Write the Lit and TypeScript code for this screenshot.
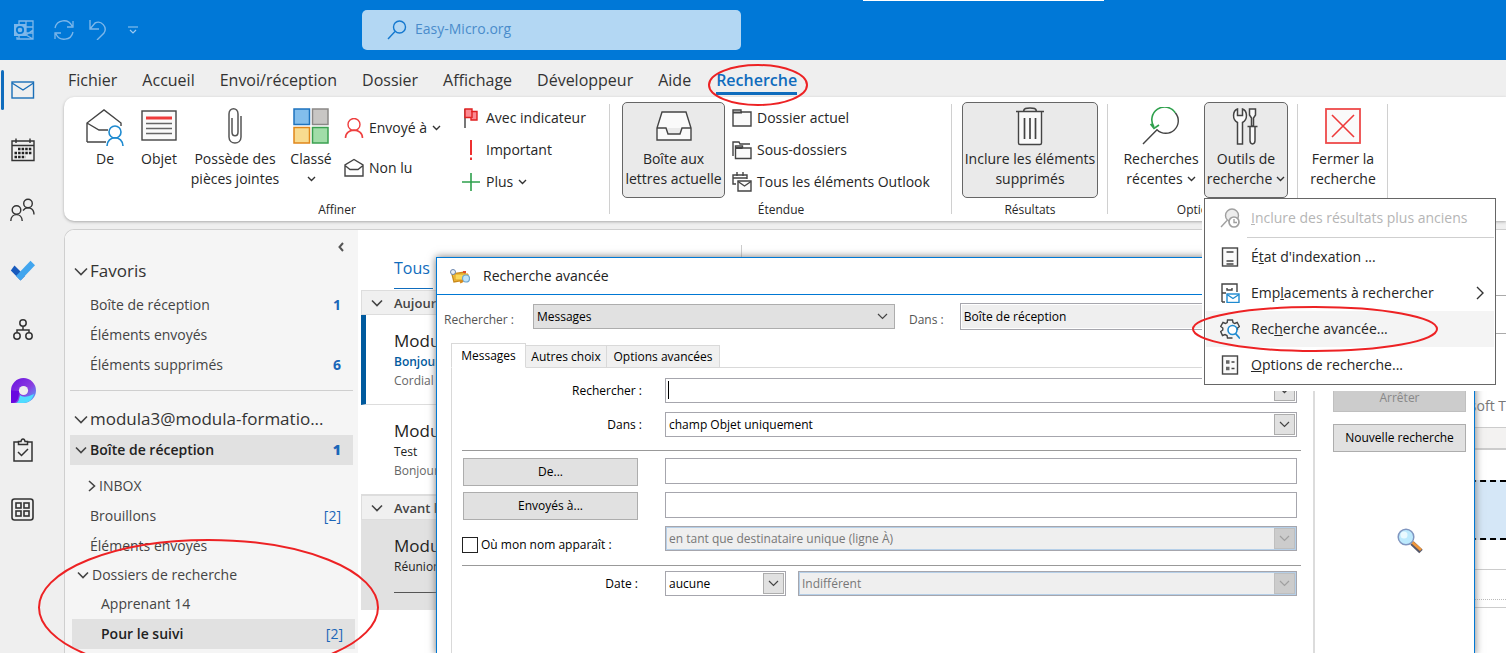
import { LitElement, html, css, svg, nothing } from "lit";
import { customElement } from "lit/decorators.js";
import { classMap } from "lit/directives/class-map.js";

const icon = (w: number, h: number, body: unknown, cls = "") =>
  html`<svg class="ico ${cls}" width=${w} height=${h} viewBox="0 0 ${w} ${h}" fill="none" stroke="#444" stroke-width="1.4" aria-hidden="true">${body}</svg>`;

const chevron = (color = "#333") =>
  icon(9, 6, svg`<path d="M1 1l3.500 3.500L8 1" stroke=${color} stroke-width="1.4"/>`, "chev");

const treeOpen = icon(14, 9, svg`<path d="M1 1.500l6 6 6-6" stroke="#444" stroke-width="1.6"/>`);
const treeSmall = icon(12, 8, svg`<path d="M1 1.500l5 5 5-5" stroke="#444" stroke-width="1.6"/>`);
const treeClosed = icon(8, 12, svg`<path d="M1 1l5.500 5L1 11" stroke="#444" stroke-width="1.6"/>`);

const icons = {
  outlook: icon(20, 20, svg`<g stroke="#7db7ea" stroke-width="1.3"><path d="M5 5V1h14v18H3v-2M12 1v6h7M12 7v6M5 1v4M12 13h7M19 10l-7 5 7 4M5 13v6"/></g><rect x="0" y="4" width="12" height="12" fill="#7db7ea" stroke="none"/><circle cx="6" cy="10" r="3.2" stroke="#0078d7" stroke-width="1.8"/>`),
  sync: icon(20, 20, svg`<g stroke="#7db7ea" stroke-width="1.3"><path d="M1 8a9 9 0 0 1 17-2M19 1v6h-6M19 12a9 9 0 0 1-17 2M1 19v-6h6"/></g>`),
  undo: icon(20, 20, svg`<path d="M2 0v9h9M2 9l5-6a7 7 0 0 1 9 10l-7 7" stroke="#7db7ea" stroke-width="1.4"/>`),
  custom: icon(10, 8, svg`<path d="M0 1h10M2 4l3 3 3-3" stroke="#9cc9f0" stroke-width="1.2"/>`),
  loupe: icon(20, 20, svg`<circle cx="12.500" cy="7" r="6" stroke="#1478cf"/><path d="M8 11.500L1 19" stroke="#1478cf"/>`),
  mail: icon(24, 18, svg`<rect x="1" y="1" width="21.500" height="16" stroke="#1b6fb8"/><path d="M1 2l11 7L22.500 2" stroke="#1b6fb8"/>`),
  calendar: icon(24, 24, svg`<path d="M1 3h22v19.500H1zM1 7.500h22M5 .5V5M19 .5V5" stroke="#333"/><path d="M7 11h14M3.500 15h17.500M3.500 19h11" stroke="#222" stroke-width="2.400" stroke-dasharray="2.500 1.100"/>`),
  people: icon(26, 24, svg`<g stroke="#333"><circle cx="6.500" cy="12" r="4.300"/><path d="M.8 23c0-8.500 11.400-8.500 11.400 0"/><circle cx="18" cy="5.500" r="4.300"/><path d="M13 12.500c4-5 11-2.500 11 4"/></g>`),
  todo: icon(26, 21, svg`<path d="M4.500 5.500L15 16l-4.500 4.500L.8 10.500z" fill="#185abd" stroke="none"/><path d="M20.500.8L25 5.200 10.500 20.500 6 16z" fill="#41a5ee" stroke="none"/>`),
  org: icon(20, 22, svg`<g stroke="#333" stroke-width="1.500"><circle cx="10" cy="4" r="3.200"/><circle cx="4" cy="17" r="3.200"/><circle cx="16" cy="17" r="3.200"/><path d="M10 7.500V11M4 13.500V11h12v2.500"/></g>`),
  loop: html`<svg class="ico" width="25" height="25" viewBox="0 0 25 25" aria-hidden="true"><defs><linearGradient id="lg" x1="0" y1="0" x2="1" y2="1"><stop offset="0" stop-color="#6a11e0"/><stop offset=".55" stop-color="#8a3ce0"/><stop offset="1" stop-color="#4ab8ff"/></linearGradient></defs><path d="M12.500 0a12.300 12.300 0 0 1 0 25H0V12.500A12.500 12.500 0 0 1 12.500 0z" fill="url(#lg)"/><path d="M5 25c3-1 3-4 4-8 3 3 9 1.500 14-1-1.500 5-5 9-10.500 9z" fill="#4fdcff"/><path d="M0 12.500V25h1c5 0 7-4 7-12z" fill="#6806e0"/><circle cx="12.500" cy="12.500" r="4.600" fill="#efefef"/></svg>`,
  tasks: icon(20, 24, svg`<g stroke="#333" stroke-width="1.500"><path d="M6 4H1v19h18V4h-5M5.500 6.500v-3H8c.5-3.500 3.500-3.500 4 0h2.500v3z"/><path d="M5 14l3.500 3.500L15 11"/></g>`),
  apps: icon(24, 24, svg`<g stroke="#333" stroke-width="1.600"><rect x="1" y="1" width="21" height="21" rx="2.500"/><rect x="5" y="5" width="5" height="5"/><rect x="13" y="5" width="5" height="5"/><rect x="5" y="13" width="5" height="5"/><rect x="13" y="13" width="5" height="5"/></g>`),
  from: icon(40, 40, svg`<path d="M2 36V17L19 4l17 13v3M2 36h19M2 17l12 7h9" fill="none"/><circle cx="30" cy="26" r="6" fill="#fff" stroke="#1e8ad0" stroke-width="1.600"/><path d="M22 40c0-11 16-11 16 0" stroke="#1e8ad0" stroke-width="1.600"/>`),
  subject: icon(36, 32, svg`<rect x="1" y="1" width="34" height="29" fill="#fafafa"/><path d="M5 8h26" stroke="#ee3a3a" stroke-width="3"/><path d="M5 13.500h26M5 18.500h26M5 23.500h26" stroke="#666"/>`),
  clip: icon(16, 38, svg`<path d="M14 9v21c0 8-12 8-12 0V7c0-7 9-7 9 0v18c0 5-6 5-6 0V11" stroke="#555" stroke-width="1.500"/>`),
  categories: icon(36, 36, svg`<g stroke-width="1.500"><rect x="1" y="1" width="15.500" height="15.500" fill="#83beec" stroke="#1e73be"/><rect x="19.500" y="1" width="15.500" height="15.500" fill="#c8c6c4" stroke="#8a8886"/><rect x="1" y="19.500" width="15.500" height="15.500" fill="#f8db8f" stroke="#e0861a"/><rect x="19.500" y="19.500" width="15.500" height="15.500" fill="#a1dda8" stroke="#3ba050"/></g>`),
  sentTo: icon(20, 20, svg`<circle cx="10" cy="6.500" r="6" stroke="#ee3f3f"/><path d="M1.500 20c0-10.500 17-10.500 17 0" stroke="#ee3f3f" stroke-width="1.600"/>`),
  unread: icon(20, 20, svg`<path d="M1 18V7l9-5.500L19 7v11zM1 7.500l5 4h8l5-4"/>`),
  flag: icon(20, 20, svg`<path d="M4 1v19" stroke="#555" stroke-width="1.600"/><path d="M4 1h7v2.500h5V12h-6V9.500H4z" fill="#fb8a92" stroke="#e02020"/><path d="M11 3v7" stroke="#e02020"/>`),
  important: icon(20, 20, svg`<path d="M10 0v15M10 17.500V20" stroke="#ee3030" stroke-width="2"/>`),
  plus: icon(20, 20, svg`<path d="M10 1v18M1 10h18" stroke="#2ea04c" stroke-width="1.600"/>`),
  inbox: icon(36, 30, svg`<path d="M1 29V17L6 1h24l5 16v12zM1 17h9l2 6h12l2-6h9" fill="#fafafa"/>`),
  folder: icon(20, 20, svg`<path d="M1 2h8v2h10v14H1z" fill="#fafafa"/><path d="M1 4.500h9" stroke-width="2"/>`),
  subfolders: icon(20, 20, svg`<path d="M1 16V2h6l1 2h10" /><path d="M3.500 18.500V6h7v2H19v10.500z" fill="#fafafa"/><path d="M3.500 8h7" stroke-width="2"/>`),
  allItems: icon(20, 20, svg`<path d="M4 12H1V3h14v4M1 6h14M5 0v4M11 0v4"/><path d="M6 9h13v10H6z" fill="#fafafa"/><path d="M6 9.500l6.500 4.500L19 9.500"/>`),
  trash: icon(30, 40, svg`<path d="M3.500 6v31c0 1 .5 1.500 1.500 1.500h20c1 0 1.500-.5 1.500-1.500V6" fill="#fafafa"/><path d="M1 5.500h28M8.500 5.500C9 2 11 2 15 2s6 0 6.500 3.500M9.500 12v21M15 12v21M20.500 12v21" stroke-width="1.700"/>`),
  recent: icon(38, 38, svg`<path d="M33.300 5.700A12.500 12.500 0 0 1 15 22.700L1 37" stroke="#444"/><path d="M33.300 5.700A12.500 12.500 0 0 0 12 20M8.500 17l3.500 4.500 5-3.500" stroke="#2ea04c" stroke-width="1.600"/>`),
  tools: icon(28, 38, svg`<path d="M5.500 37V15.500C0 12.500.5 4 5.500 2v6.500h5V2c5 2 5.500 10.500 0 13.500V37z" fill="#fafafa" stroke-width="1.500"/><path d="M17.500 2h6v6l-2 3v8h-2v-8l-2-3zM15.500 19.500h10M18 19.500h5v14c0 4.500-5 4.500-5 0z" fill="#fafafa" stroke-width="1.500"/>`),
  close: icon(36, 36, svg`<rect x="1" y="1" width="34" height="34" fill="#fafafa" stroke="#ee4a4a" stroke-width="1.800"/><path d="M7 7l22 22M29 7L7 29" stroke="#ee3a3a" stroke-width="1.600"/>`),
  older: icon(20, 20, svg`<g stroke="#a0a0a0"><circle cx="12" cy="7.500" r="6.500" fill="#ededed"/><path d="M7 12.500L1 19"/><circle cx="14" cy="14" r="5" fill="#fff" stroke-width="1.700"/><path d="M14 11v3.500h3"/></g>`),
  indexing: icon(20, 20, svg`<rect x="2.500" y="1" width="15" height="18" fill="#fafafa"/><path d="M6.500 5h7M6.500 14h7M6.500 17h7"/>`),
  places: icon(20, 20, svg`<path d="M2 19V1h15v8M2 10h4M2 19h3" /><path d="M7 5v2h5V5"/><rect x="7" y="11" width="12" height="8.500" stroke="#1e8ad0" fill="#fff"/><path d="M7 11.500l6 4 6-4" stroke="#1e8ad0"/>`),
  advanced: icon(20, 20, svg`<path d="M12.500 19H7.500L7 16.500 5 15.500l-2.500 1L.7 12.500 2.800 11V9L.7 7.500 3 3.500l2.500 1L7.200 3.500 7.500 1h5l.5 2.500 1.700 1 2.500-1 2.200 4L17.500 9v2"/><circle cx="12.500" cy="11" r="4.500" stroke="#1e8ad0" fill="#fff" stroke-width="1.600"/><path d="M15.500 14.500l4.500 5" stroke="#1e8ad0" stroke-width="1.800"/>`),
  options: icon(20, 20, svg`<rect x="2.500" y="1" width="15" height="18" fill="#fafafa"/><path d="M6 7h3.500M6 13.500h3.500" stroke="#666" stroke-width="3.500"/><path d="M11.500 7h3M11.500 13.500h3"/>`),
  submenu: icon(8, 14, svg`<path d="M1 1l6 6-6 6" stroke="#333"/>`),
  searchFolder: icon(20, 16, svg`<path d="M2 6l13-2v8L4 14z" fill="#f7c948" stroke="#c98a1b"/><path d="M5 6h13v6H5z" fill="#fbd85a" stroke="#dd9c20" stroke-width="1"/><path d="M13 4h3" stroke="#e0502a" stroke-width="2"/><circle cx="3" cy="4" r="2.500" fill="#e7eef7" stroke="#6b86ad" stroke-width="1"/><circle cx="16" cy="10.500" r="3.500" fill="#bfe4fa" stroke="#6da6d0" stroke-width="1.200"/><path d="M10 14.500l3-1.500" stroke="#d98a1b" stroke-width="2"/>`),
  bigLoupe: icon(26, 26, svg`<path d="M15 15l9 8.500" stroke="#55586b" stroke-width="5"/><path d="M15 14l9 8" stroke="#f0963a" stroke-width="3"/><circle cx="9" cy="9" r="7.800" fill="#bdeafd" stroke="#8096c0" stroke-width="1.500"/><circle cx="7" cy="7" r="3.500" fill="#eafaff" stroke="none"/>`),
};

interface Folder { name: string; count?: string; kind?: string; tree?: unknown; cls?: string }
interface Mail { from: string; subject: string; preview?: string; cls?: string }

@customElement("app-root")
export class AppRoot extends LitElement {
  static styles = css`
    :host { display: flex; flex-direction: column; height: 100vh; overflow: hidden; position: relative;
      font: 14px/20px "Open Sans", "Noto Sans", sans-serif; color: #262626; background: #efefef; }
    * { box-sizing: border-box; }
    .ico { display: block; flex: none; }
    button, input, select { font: inherit; color: inherit; margin: 0; border-radius: 0; }
    button { border: 0; background: none; padding: 0; }

    .topbar { flex: none; height: 60px; background: #0078d7; display: flex; align-items: center; padding-left: 14px; position: relative; }
    .quick { display: flex; align-items: center; gap: 20px; flex: none; width: 348px; }
    .quick button:nth-child(2) { margin-right: -6px; }
    .search { flex: none; width: 379px; height: 40px; border-radius: 5px; background: #b3d7f3; display: flex; align-items: center; gap: 8px; padding-left: 25px; }
    .search input { border: 0; background: none; outline: 0; width: 240px; padding: 0 0 2px; }
    .search input::placeholder { color: #4a8ccb; opacity: 1; }
    .sliver { position: absolute; left: 863px; top: 0; width: 241px; height: 1px; background: #fff; }

    .shell { flex: 1; min-height: 0; display: grid; grid-template-columns: 64px minmax(0, 1fr); }
    .rail { display: flex; flex-direction: column; }
    .rail a { height: 60px; width: 46px; display: flex; align-items: center; justify-content: center; position: relative; }
    .rail a.on::before { content: ""; position: absolute; left: 1px; top: 10px; width: 3px; height: 40px; background: #0f6cbd; border-radius: 2px; }
    .main { display: flex; flex-direction: column; min-height: 0; }

    .tabs { flex: none; height: 37px; display: flex; gap: 25px; padding: 7px 0 0 4px; font-size: 16px; line-height: 26px; }
    .tabs a { color: #333; text-decoration: none; height: 28px; }
    .tabs a.on { color: #0f6cbd; font-weight: 600; border-bottom: 3px solid #0f6cbd; }

    .ribbon { flex: none; position: relative; z-index: 3; height: 124px; display: flex; background: #fff; border-radius: 10px 0 0 10px; box-shadow: 0 1px 3px #aaa; padding-top: 5px; }
    .group { display: flex; flex-direction: column; position: relative; }
    .group::after { content: ""; position: absolute; right: 0; top: 2px; height: 110px; width: 1px; background: #d0d0d0; }
    .row { display: flex; height: 96px; padding-left: 10px; }
    .glabel { font-size: 12px; line-height: 22px; padding-top: 1px; text-align: center; }
    .affiner { width: 546px; }
    .affiner .row { padding-left: 14px; }
    .etendue { width: 342px; }
    .etendue .row { padding-left: 12px; }
    .resultats { width: 156px; }
    .options { width: 190px; }
    .options .glabel { padding-right: 8px; }
    .fermer { width: 90px; }
    .fermer .row { padding-left: 3px; }
    .big { display: flex; flex-direction: column; align-items: center; white-space: nowrap; border: 1px solid transparent; border-radius: 5px; flex: none; }
    .big .pic { height: 46px; display: flex; align-items: center; justify-content: center; }
    .big .lines { display: flex; flex-direction: column; align-items: center; }
    .big .lines span { display: flex; align-items: center; justify-content: center; gap: 4px; height: 20px; }
    .big.on { background: #eaeaea; border-color: #666; }
    .w54 { width: 54px; } .w98 { width: 98px; } .w103 { width: 103px; } .w136 { width: 136px; }
    .w86 { width: 86px; } .w84 { width: 84px; }
    .col { display: flex; flex-direction: column; }
    .col.a { width: 117px; margin-left: 6px; padding-top: 6px; }
    .col.a .small { height: 40px; }
    .col.b .small { height: 32px; }
    .col.c { margin-left: 7px; }
    .col.c .small { height: 32px; }
    .small { display: flex; align-items: center; gap: 5px; white-space: nowrap; }
    .anchor { position: relative; display: flex; }

    .menu { position: absolute; left: 0; top: 96px; width: 292px; background: #fff; border: 1px solid #666; padding: 1px; box-shadow: 0 6px 0 #fff, -2px 0 0 #fff; z-index: 4; }
    .menu button { display: flex; align-items: center; width: 100%; height: 36px; padding: 0 10px 0 14px; gap: 11px; text-align: left; white-space: nowrap; }
    .menu button.on { background: #f4f4f4; }
    .menu button:disabled { color: #b5b5b5; }
    .menu span { flex: 1; }
    .menu hr { border: 0; border-top: 1px solid #cfcfcf; margin: 1px 0 1px 41px; }

    .workspace { flex: 1; min-height: 0; margin-top: 8px; display: flex; background: #fff; border-top: 1px solid #cfcfcf; border-left: 1px solid #cfcfcf; border-radius: 10px 0 0 0; }
    .folders { flex: none; width: 293px; background: #f5f5f5; border-radius: 9px 0 0 0; padding: 0 5px; overflow: hidden; display: flex; flex-direction: column; color: #444; }
    .collapse { flex: none; align-self: flex-end; height: 22px; padding: 11px 9px 0 0; }
    .folder { flex: none; display: flex; align-items: center; height: 30px; padding: 0 12px 0 20px; text-decoration: none; color: inherit; }
    .folder b, .folder i { margin-left: auto; font-style: normal; color: #1b66b8; }
    .folder .ico { margin-left: -16px; margin-right: 2px; }
    .folder.head { font-size: 17px; color: #333; height: 38px; }
    .folder.account { height: 32px; }
    .folder.inbox { background: #e1e1e1; font-weight: 600; color: #222; margin-bottom: 6px; }
    .folder.inbox .ico, .folder.node .ico { margin-left: -15px; margin-right: 3px; }
    .folder.sub .ico { margin-left: -2px; margin-right: 3px; }
    .folder.node { padding-left: 22px; height: 28px; }
    .folder.leaf { padding-left: 31px; }
    .folder.current { background: #e1e1e1; font-weight: 600; color: #222; margin: 0 -2px 0 2px; padding-left: 29px; }
    .folder.current i { font-weight: 400; }
    .folders hr { flex: none; width: 100%; border: 0; border-top: 1px solid #cfcfcf; margin: 10px 0 12px; }

    .messages { flex: none; width: 384px; padding-left: 3px; position: relative; }
    .messages::after { content: ""; position: absolute; right: 0; top: 15px; height: 120px; width: 1px; background: #ccc; }
    .filter { height: 60px; padding: 23px 0 0 33px; font-size: 16px; line-height: 30px; }
    .filter a { display: inline-block; height: 36px; padding-right: 3px; color: #0f6cbd; text-decoration: none; border-bottom: 1px solid #0f6cbd; }
    .day { height: 25px; background: #f0f0f0; border: 1px solid #ddd; display: flex; align-items: center; gap: 11px; padding-left: 9px; font-size: 13px; font-weight: 600; color: #444; white-space: nowrap; }
    .mail { height: 90px; padding: 14px 0 0 33px; border-bottom: 1px solid #ddd; font-size: 12px; }
    .mail strong { display: block; font-weight: 400; font-size: 17px; line-height: 24px; color: #222; }
    .mail em { display: block; font-style: normal; color: #222; line-height: 17px; }
    .mail small { display: block; font-size: 12px; line-height: 21px; color: #666; }
    .mail.unread { border-left: 5px solid #005a9e; padding-left: 28px; }
    .mail.unread em { color: #005a9e; font-weight: 600; }
    .mail.picked { background: #e1e1e1; border: 0; }
    .mail.picked hr { border: 0; border-top: 1px solid #555; margin: 17px 0 0; }

    .agenda { flex: 1; display: flex; flex-direction: column; align-items: stretch; }
    .agenda .box { margin: 65px 0 0; height: 39px; border: solid #aaa; border-width: 1px 0; flex: none; }
    .agenda .title { height: 93px; flex: none; text-align: right; white-space: nowrap; color: #777; font-size: 14px; line-height: 30px; padding-top: 57px; }
    .agenda .bar { height: 23px; flex: none; background: #f3f2f1; border: solid #ccc; border-width: 1px 0 2px; }
    .agenda .slot { height: 60px; flex: none; margin-top: 30px; background: #d5e7f7; border: dashed #000; border-width: 2px 0; }
    .agenda .l1 { height: 30px; flex: none; border-bottom: 1px solid #ccc; }
    .agenda .l2 { height: 30px; flex: none; border-bottom: 1px dotted #bbb; }
    .agenda .l3 { height: 8px; flex: none; border-bottom: 1px solid #ccc; }

    .dialog { position: absolute; z-index: 2; left: 436px; top: 257px; right: 31px; bottom: -2px; background: #fff; border: 1px solid #0078d4; box-shadow: 0 0 8px #777; font-size: 12px; color: #000; display: flex; flex-direction: column; }
    .dtitle { flex: none; height: 37px; display: flex; align-items: center; gap: 13px; padding-left: 13px; font-size: 14px; color: #222; border-bottom: 1px solid #0078d4; font-weight: 400; margin: 0; }
    .scope { flex: none; display: flex; align-items: center; height: 27px; margin: 8px 0 0 7px; color: #555; }
    .scope label { padding-top: 6px; }
    .scope .combo { width: 362px; margin: 0 14px 0 19px; }
    .scope .place { width: 350px; height: 27px; margin-left: 16px; padding: 0 3px; color: #000; background: #efefef; border: 1px solid #a6a6ad; outline: 1px solid #fff; outline-offset: -2px; }
    .dbody { flex: 1; display: flex; margin-top: 13px; padding-left: 14px; }
    .left { flex: 1; display: flex; flex-direction: column; }
    .dtabs { display: flex; align-items: flex-end; height: 25px; margin-bottom: -1px; position: relative; }
    .dtabs button { height: 23px; border: 1px solid #d9d9d9; border-left-width: 0; background: #f0f0f0; padding: 0 3px; width: 81px; white-space: nowrap; }
    .dtabs button:last-child { width: 113px; }
    .dtabs button.on { height: 25px; width: 75px; background: #fff; border-left-width: 1px; border-bottom-color: #fff; }
    .panel { flex: 1; border: 1px solid #d9d9d9; border-right: 2px solid #dcdcdc; padding: 10px 12px 0 10px; }
    .frow { display: grid; grid-template-columns: 180px minmax(0, 1fr); column-gap: 23px; align-items: center; padding-right: 4px; margin-bottom: 6px; }
    .frow.first { margin-bottom: 9px; }
    .frow > label { text-align: right; }
    .frow .push { width: 175px; height: 28px; margin-left: 1px; background: #e1e1e1; border: 1px solid #adadad; }
    .frow input[type="text"] { align-self: start; width: 100%; height: 26px; border: 1px solid #a6a6ad; background: #fff; padding: 0 3px; outline: 0; }
    .frow .check { display: flex; align-items: center; gap: 3px; text-align: left; height: 25px; padding-top: 13px; white-space: nowrap; }
    .check input { appearance: none; width: 16px; height: 16px; border: 1px solid #222; background: #fff; flex: none; }
    .panel hr { border: 0; border-top: 1px solid #999; margin: 13px 0 7px; }
    .panel hr.low { margin: 14px 0 5px; }
    .frow.date > label { padding-right: 4px; }
    .dates { display: grid; grid-template-columns: 121px minmax(0, 1fr); gap: 12px; }
    .combo { position: relative; display: block; height: 25px; }
    .combo select, .frow .combo input[type="text"] { appearance: none; display: block; width: 100%; height: 25px; padding: 0 3px; border: 1px solid #a6a6ad; background: #fff; outline: 0; opacity: 1; color: #000; }
    .combo .drop { position: absolute; right: 2px; top: 2px; width: 21px; height: 21px; background: #e1e1e1; border: 1px solid #adadad; display: flex; align-items: center; justify-content: center; pointer-events: none; }
    .combo.flat select { background: #e1e1e1; border-color: #adadad; }
    .combo.flat .drop { border: 0; background: none; }
    .combo.off select { background: #efefef; color: #777; box-shadow: inset 0 0 0 1px #b5cfe8; }
    .combo.off .drop { background: #ccc; border-color: #bfbfbf; }
    .caret { position: absolute; left: 3px; top: 3px; width: 1px; height: 18px; background: #000; }
    .side { flex: none; width: 159px; padding: 41px 8px 0 18px; display: flex; flex-direction: column; align-items: stretch; gap: 12px; }
    .side button { height: 28px; background: #e1e1e1; border: 1px solid #adadad; white-space: nowrap; }
    .side button:disabled { background: #ccc; border-color: #bfbfbf; color: #888; }
    .side .ico { align-self: center; margin: 64px 0 0 20px; }

    .mark { position: absolute; z-index: 9; pointer-events: none; overflow: visible; }
    .m1 { left: 708px; top: 64px; } .m2 { left: 1192px; top: 306px; } .m3 { left: 38px; top: 539px; }
  `;

  private folders: Folder[] = [
    { name: "Favoris", cls: "head", tree: treeOpen },
    { name: "Boîte de réception", count: "1", kind: "b" },
    { name: "Éléments envoyés" },
    { name: "Éléments supprimés", count: "6", kind: "b" },
    { name: "", kind: "hr" },
    { name: "modula3@modula-formatio...", cls: "head account", tree: treeOpen },
    { name: "Boîte de réception", count: "1", kind: "b", cls: "inbox", tree: treeSmall },
    { name: "INBOX", cls: "sub", tree: treeClosed },
    { name: "Brouillons", count: "[2]" },
    { name: "Éléments envoyés" },
    { name: "Dossiers de recherche", cls: "node", tree: treeSmall },
    { name: "Apprenant 14", cls: "leaf" },
    { name: "Pour le suivi", count: "[2]", cls: "current" },
  ];

  private folder(f: Folder) {
    if (f.kind === "hr") return html`<hr />`;
    return html`<a class="folder ${f.cls ?? ""}" href="#">${f.tree ?? nothing}<span>${f.name}</span>${
      f.count ? (f.kind === "b" ? html`<b>${f.count}</b>` : html`<i>${f.count}</i>`) : nothing}</a>`;
  }

  private big(pic: unknown, lines: unknown[], width: string, on = false) {
    return html`<button class=${classMap({ big: true, [width]: true, on })}><span class="pic">${pic}</span>
      <span class="lines">${lines.map((l) => html`<span>${l}</span>`)}</span></button>`;
  }

  private small(pic: unknown, text: string, drop = false) {
    return html`<button class="small">${pic}${text}${drop ? chevron() : nothing}</button>`;
  }

  private mail(m: Mail) {
    return html`<article class="mail ${m.cls ?? ""}"><strong>${m.from}</strong><em>${m.subject}</em>${
      m.preview ? html`<small>${m.preview}</small>` : html`<hr />`}</article>`;
  }

  private select(id: string, value: string, cls = "", label?: string) {
    const off = cls === "off";
    return html`<span class="combo ${cls}"><select id=${id} aria-label=${label ?? nothing} ?disabled=${off}><option>${value}</option></select>
      <span class="drop">${icon(11, 7, svg`<path d="M1 1l4.500 4.500L10 1" stroke=${off ? "#a0a0a0" : "#444"} stroke-width="1.200"/>`)}</span></span>`;
  }

  private ribbon() {
    return html`<section class="ribbon">
      <div class="group affiner"><div class="row">
        ${this.big(icons.from, ["De"], "w54")}
        ${this.big(icons.subject, ["Objet"], "w54")}
        ${this.big(icons.clip, ["Possède des", "pièces jointes"], "w98")}
        ${this.big(icons.categories, ["Classé", chevron()], "w54")}
        <div class="col a">${this.small(icons.sentTo, "Envoyé à", true)}${this.small(icons.unread, "Non lu")}</div>
        <div class="col b">${this.small(icons.flag, "Avec indicateur")}${this.small(icons.important, "Important")}${this.small(icons.plus, "Plus", true)}</div>
      </div><div class="glabel">Affiner</div></div>
      <div class="group etendue"><div class="row">
        ${this.big(icons.inbox, ["Boîte aux", "lettres actuelle"], "w103", true)}
        <div class="col c">${this.small(icons.folder, "Dossier actuel")}${this.small(icons.subfolders, "Sous-dossiers")}${this.small(icons.allItems, "Tous les éléments Outlook")}</div>
      </div><div class="glabel">Étendue</div></div>
      <div class="group resultats"><div class="row">
        ${this.big(icons.trash, ["Inclure les éléments", "supprimés"], "w136", true)}
      </div><div class="glabel">Résultats</div></div>
      <div class="group options"><div class="row">
        ${this.big(icons.recent, ["Recherches", html`récentes ${chevron()}`], "w86")}
        <div class="anchor">
          ${this.big(icons.tools, ["Outils de", html`recherche ${chevron()}`], "w84", true)}
          <div class="menu" role="menu">
            <button role="menuitem" disabled>${icons.older}<span><u>I</u>nclure des résultats plus anciens</span></button>
            <hr />
            <button role="menuitem">${icons.indexing}<span>É<u>t</u>at d'indexation ...</span></button>
            <button role="menuitem">${icons.places}<span>Emp<u>l</u>acements à rechercher</span>${icons.submenu}</button>
            <button role="menuitem" class="on">${icons.advanced}<span>Rec<u>h</u>erche avancée...</span></button>
            <button role="menuitem">${icons.options}<span><u>O</u>ptions de recherche...</span></button>
          </div>
        </div>
      </div><div class="glabel">Options</div></div>
      <div class="group fermer"><div class="row">
        ${this.big(icons.close, ["Fermer la", "recherche"], "w84")}
      </div></div>
    </section>`;
  }

  private dialog() {
    return html`<section class="dialog" role="dialog" aria-labelledby="dt">
      <h2 class="dtitle" id="dt">${icons.searchFolder}Recherche avancée</h2>
      <div class="scope">
        <label for="kind">Rechercher :</label>${this.select("kind", "Messages", "flat")}
        <label for="place">Dans :</label><input class="place" id="place" type="text" readonly .value=${"Boîte de réception"} />
      </div>
      <div class="dbody">
        <div class="left">
          <div class="dtabs" role="tablist"><button role="tab" class="on">Messages</button><button role="tab">Autres choix</button><button role="tab">Options avancées</button></div>
          <div class="panel">
            <div class="frow first"><label for="q">Rechercher :</label><span class="combo"><input id="q" type="text" /><span class="caret"></span><span class="drop">${chevron("#444")}</span></span></div>
            <div class="frow"><label for="f">Dans :</label>${this.select("f", "champ Objet uniquement")}</div>
            <hr />
            <div class="frow"><button class="push">De...</button><input type="text" aria-label="De" /></div>
            <div class="frow"><button class="push">Envoyés à...</button><input type="text" aria-label="Envoyés à" /></div>
            <div class="frow"><label class="check"><input type="checkbox" />Où mon nom apparaît :</label>${this.select("w", "en tant que destinataire unique (ligne À)", "off", "Destinataire")}</div>
            <hr class="low" />
            <div class="frow date"><label for="d">Date :</label><div class="dates">${this.select("d", "aucune")}${this.select("d2", "Indifférent", "off", "Période")}</div></div>
          </div>
        </div>
        <div class="side"><button disabled>Arrêter</button><button>Nouvelle recherche</button>${icons.bigLoupe}</div>
      </div>
    </section>`;
  }

  private mark(cls: string, w: number, h: number) {
    return html`<svg class="mark ${cls}" width=${w} height=${h} aria-hidden="true"><ellipse cx=${w / 2} cy=${h / 2} rx=${w / 2 - 1} ry=${h / 2 - 1} fill="none" stroke="#ed2224" stroke-width="2"/></svg>`;
  }

  render() {
    const tabs = ["Fichier", "Accueil", "Envoi/réception", "Dossier", "Affichage", "Développeur", "Aide", "Recherche"];
    const rail: [string, unknown][] = [["Courrier", icons.mail], ["Calendrier", icons.calendar], ["Contacts", icons.people], ["To Do", icons.todo],
      ["Organigramme", icons.org], ["Loop", icons.loop], ["Tâches", icons.tasks], ["Applications", icons.apps]];
    return html`
      <header class="topbar">
        <div class="quick"><button aria-label="Outlook">${icons.outlook}</button><button aria-label="Synchroniser">${icons.sync}</button><button aria-label="Annuler">${icons.undo}</button><button aria-label="Personnaliser">${icons.custom}</button></div>
        <label class="search">${icons.loupe}<input type="search" aria-label="Rechercher" placeholder="Easy-Micro.org" /></label>
        <div class="sliver"></div>
      </header>
      <div class="shell">
        <nav class="rail">${rail.map(([name, pic], i) => html`<a href="#" aria-label=${name} class=${classMap({ on: i === 0 })}>${pic}</a>`)}</nav>
        <main class="main">
          <nav class="tabs">${tabs.map((t) => html`<a href="#" class=${classMap({ on: t === "Recherche" })}>${t}</a>`)}</nav>
          ${this.ribbon()}
          <div class="workspace">
            <aside class="folders">
              <button class="collapse" aria-label="Réduire">${icon(6, 10, svg`<path d="M5 1L1.500 5 5 9" stroke="#555" stroke-width="2"/>`)}</button>
              ${this.folders.map((f) => this.folder(f))}
            </aside>
            <section class="messages">
              <div class="filter"><a href="#">Tous</a></div>
              <div class="day">${treeSmall}Aujourd</div>
              ${this.mail({ from: "Modul", subject: "Bonjour", preview: "Cordial", cls: "unread" })}
              ${this.mail({ from: "Modul", subject: "Test", preview: "Bonjour" })}
              <div class="day">${treeSmall}Avant l</div>
              ${this.mail({ from: "Modul", subject: "Réunion", cls: "picked" })}
            </section>
            <section class="agenda">
              <div class="box"></div><div class="title">Microsoft T</div><div class="bar"></div><div class="slot"></div>
              <div class="l1"></div><div class="l2"></div><div class="l3"></div>
            </section>
          </div>
        </main>
      </div>
      ${this.dialog()}
      ${this.mark("m1", 100, 42)}${this.mark("m2", 246, 46)}${this.mark("m3", 341, 137)}
    `;
  }
}
